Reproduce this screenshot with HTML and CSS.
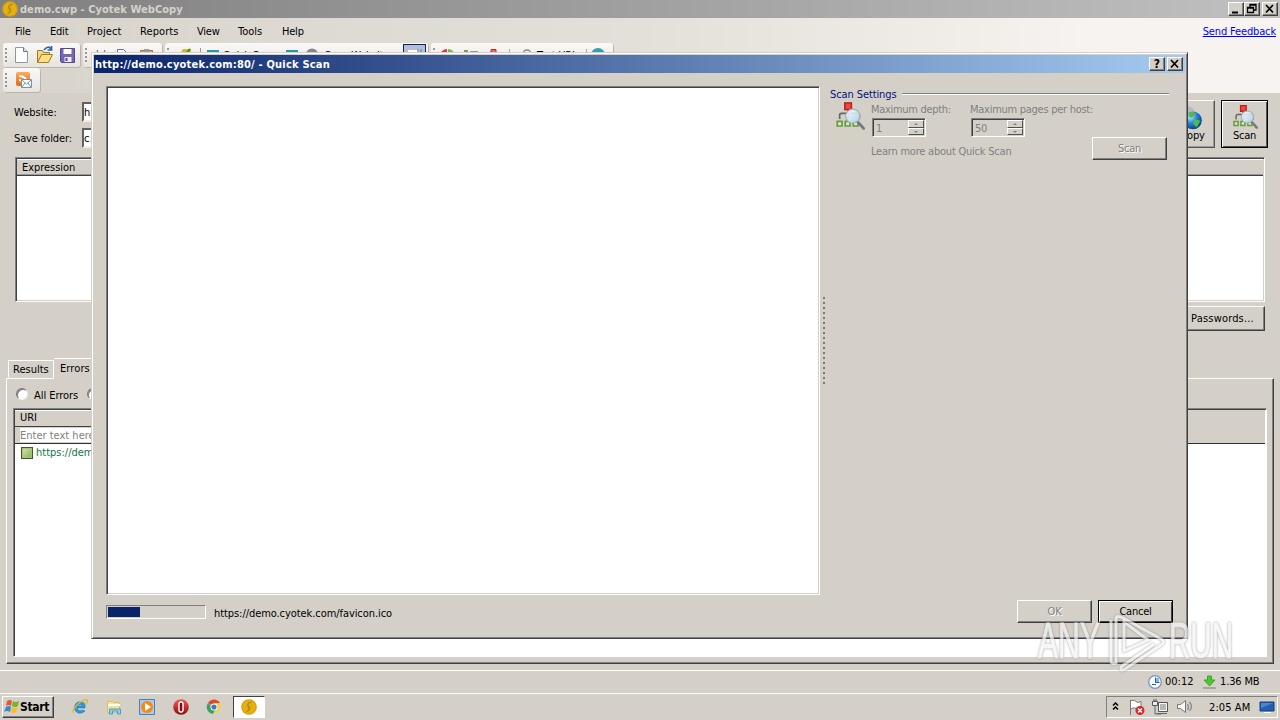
FILE: index.html
```html
<!DOCTYPE html>
<html lang="en">
<head>
<meta charset="utf-8">
<title>demo.cwp - Cyotek WebCopy</title>
<link rel="stylesheet" href="styles.css">
</head>
<body>
<svg class="defs" width="0" height="0">
  <defs>
    <radialGradient id="globe" cx=".35" cy=".3" r=".8"><stop offset="0" stop-color="#b5f1ff"/><stop offset=".45" stop-color="#2485d6"/><stop offset="1" stop-color="#06337a"/></radialGradient>
    <radialGradient id="gold"><stop offset="0" stop-color="#d6a313"/><stop offset=".65" stop-color="#e8b510"/><stop offset="1" stop-color="#d99a00"/></radialGradient>
    <linearGradient id="lens" x2="1" y2="1"><stop stop-color="#fff"/><stop offset="1" stop-color="#a9cfec"/></linearGradient>
    <linearGradient id="orange" y2="1" x2="0"><stop stop-color="#ffac5c"/><stop offset="1" stop-color="#e96612"/></linearGradient>
    <linearGradient id="red" y2="1" x2="0"><stop stop-color="#f35a52"/><stop offset="1" stop-color="#8e0c10"/></linearGradient>
    <symbol id="coin" viewBox="0 0 16 16"><circle cx="8" cy="8" r="7.8" fill="url(#gold)"/><path d="M10.5 3.5C7 3 6 6 7.4 7.6S9 12 5.5 12.4" fill="none" stroke="#a8861b" stroke-width="1.3"/></symbol>
    <symbol id="sitemap" viewBox="0 0 32 32">
      <path d="M5 19v-4q0-2 2-2h17q2 0 2 2v4M14 9v10" fill="none" stroke="#666" stroke-width="1.8"/>
      <rect x="10.500" y="2" width="7" height="7" fill="#f0483e" stroke="#b9201c" stroke-width="1.6"/>
      <path d="M2.500 21.500h5v5h-5zM11 21.500h5v5h-5zM19.500 21.500h5v5h-5z" fill="#dcebc8" stroke="#639c39" stroke-width="1.8"/>
      <path d="m24 22 6.500 7" stroke="#73797d" stroke-width="3" stroke-linecap="round"/>
      <circle cx="19" cy="16" r="7.500" fill="url(#lens)" fill-opacity=".9" stroke="#a2b1bd" stroke-width="1.3"/>
    </symbol>
  </defs>
</svg>
<div class="desktop">
  <header class="titlebar">
    <svg class="app-icon"><use href="#coin"/></svg>
    <span class="app-title">demo.cwp - Cyotek WebCopy</span>
    <div class="caption-buttons">
      <i class="cap"><svg width="14" height="12"><path d="M3 9.500h6" stroke="#000" stroke-width="2"/></svg></i>
      <i class="cap"><svg width="14" height="12"><path d="M5 4V1.500h6V7H9M5 2h6M2.500 4.500h6v5h-6zM2 5h7" fill="none" stroke="#000" stroke-width="1.3"/></svg></i>
      <i class="cap last"><svg width="14" height="12"><path d="m3 2 7 7.500M10 2 3 9.500" stroke="#000" stroke-width="1.7"/></svg></i>
    </div>
  </header>
  <div class="bars">
    <nav class="menu">
      <span class="m1">File</span><span class="m2">Edit</span><span class="m3">Project</span><span class="m4">Reports</span><span class="m5">View</span><span class="m6">Tools</span><span class="m7">Help</span>
      <a class="feedback">Send Feedback</a>
    </nav>
    <div class="tools">
      <div class="strip s1"><i class="grip"></i>
        <svg width="68" height="22">
          <path d="M4.500 3.500h8l4 4v11h-12z" fill="#fff" stroke="#879aaa"/><path d="M12.500 3.500v4h4" fill="#d6e4ef" stroke="#64798b"/>
          <path d="M26.500 18.500V6.500h5l1 2h6v3" fill="#f2d98a" stroke="#9c7b2f"/><path d="m26.500 18.500 4-8h11l-4 8z" fill="#ffdf80" stroke="#a17b29"/><path d="M33 6q4-5 7-1M40.500 2v4h-4" fill="none" stroke="#2d63ae" stroke-width="1.7"/>
          <path d="M49.500 4.500h14v14h-13l-1-1z" fill="#7567b3" stroke="#564894"/><path d="M52.500 5h8v5h-8z" fill="#fff"/><path d="M53.500 13h7v5h-7z" fill="#eef"/><path d="M54.500 14h2v3h-2z" fill="#564894"/>
        </svg>
      </div>
      <div class="strip s2"><i class="grip"></i>
        <svg width="70" height="22"><path d="m6 6 2 6M14 6l-2 6" stroke="#73859a" stroke-width="1.2"/><path d="M26.500 5.500h6l3 3v6h-9z" fill="#fff" stroke="#63738b"/><path d="M49.500 6.500h12v9h-12z" fill="#d9a870" stroke="#9e6a3a"/><path d="M53 5h5v4h-5z" fill="#999"/></svg>
      </div>
      <div class="strip s3"><i class="grip"></i>
        <svg width="34" height="22"><path d="M2 8h6l2-3h8v12H2z" fill="#d5b739"/><path d="m11 12 6-7" stroke="#528c2f" stroke-width="2"/><path d="M27.500 4v15" stroke="#999"/></svg>
        <svg width="14" height="22"><rect y="6" width="12" height="9" fill="#2898a7"/></svg><span class="quick">Quick Scan</span>
        <svg width="38" height="22"><rect x="1" y="6" width="12" height="9" fill="#2898a7"/><circle cx="27" cy="11" r="6.500" fill="#888890"/></svg><span class="copyw">Copy Website</span>
        <i class="picked"><svg width="20" height="20"><path d="M4 5h10v9H4z" fill="#fff"/><path d="M14 4v9M17 4v9" stroke="#6480a5"/></svg></i>
      </div>
      <div class="strip s4"><i class="grip"></i>
        <svg width="82" height="22"><path d="M8 5a7 7 0 0 0-7 7h7z" fill="#d63940"/><path d="M9 5a7 7 0 0 1 7 7H9z" fill="#76ba48"/><path d="M25 6h4v4h-4z" fill="#7c9d53"/><path d="M31 8h8" stroke="#777" stroke-width="1.500"/><path d="M52 5.500h5v6h-5z" fill="#ef6c58" stroke="#b32f25"/><path d="M70.500 5v15" stroke="#aaa"/></svg>
        <svg width="14" height="22"><circle cx="6" cy="10" r="4" fill="none" stroke="#888" stroke-width="1.500"/><circle cx="6" cy="10" r="1.500"/></svg><span class="testurl">Test URL</span>
        <svg width="30" height="22"><path d="M5.500 5v15" stroke="#aaa"/><circle cx="17" cy="11" r="7" fill="#359fb3"/></svg>
      </div>
    </div>
    <div class="tools second">
      <div class="strip rss"><i class="grip"></i><svg width="25" height="24"><rect x="5" y="4" width="14" height="14" rx="2" fill="url(#orange)"/><path d="M8 8q8 0 8 8M8 12q4 0 4 4" fill="none" stroke="#fff" stroke-width="1.8"/><path d="M10.500 11.500h10v8h-10z" fill="#fff" stroke="#7793ae"/><path d="m11 12 4.500 4 4.500-4M11 19l3-4M20 19l-3-4" fill="none" stroke="#7793ae"/></svg></div>
    </div>
  </div>
  <section class="project">
    <div class="fields">
      <div class="field"><label class="l1">Website:</label><span class="input">http://demo.cyotek.com/</span></div>
      <div class="field"><label class="l2">Save folder:</label><span class="input">c:\</span></div>
    </div>
    <div class="big-buttons">
      <span class="big"><svg width="30" height="30" viewBox="0 0 32 32"><path d="m8 2 8 3 6 7-5 5L8 15z" fill="#b4b8ba"/><circle cx="17" cy="18.500" r="9.500" fill="url(#globe)"/><path d="M13 10q5-2 7 2l-5 4q-4-2-2-6m6 7 6 2-4 7-4-4z" fill="#51b947"/></svg><b class="copy-label">Copy</b></span>
      <span class="big focus"><svg width="26" height="26"><use href="#sitemap"/></svg><b>Scan</b></span>
    </div>
  </section>
  <div class="rules"><div class="rules-head"><span>Expression</span></div></div>
  <div class="actions"><span class="button passwords">Passwords...</span></div>
  <div class="tabs"><span class="tab results">Results</span><span class="tab active">Errors</span></div>
  <section class="page">
    <div class="radios"><i class="radio"></i><span class="all">All Errors</span><i class="radio r2"></i></div>
    <div class="grid">
      <div class="grid-head"><span>URI</span></div>
      <div class="grid-filter"><span>Enter text here</span></div>
      <div class="grid-row"><i class="green"></i><span>https://demo.cyotek.com/</span></div>
    </div>
  </section>
  <footer class="status">
    <svg width="16" height="16"><circle cx="8" cy="8" r="6.300" fill="#f5faff" stroke="#7a98b8" stroke-width="1.300"/><path d="M8 4h4v4.500H8z" fill="#8fb6e6"/><path d="M8.500 3.500v5h4M5 10.500h4" fill="none" stroke="#2b5da6"/></svg>
    <span class="clock">00:12</span>
    <svg width="16" height="16"><path d="M5.500 2h4v4H13l-5.500 6L2 6h3.500z" fill="#46cb28" stroke="#3fa42a"/><path d="M1 14h13" stroke="#999" stroke-width="1.500"/></svg>
    <span class="size">1.36 MB</span>
  </footer>
  <footer class="taskbar">
    <span class="start"><svg width="17" height="17"><path d="M4 2q3-2 5 0L8 7Q5 5 3 7z" fill="#e7582d"/><path d="M10 2q3 2 6 0l-1 5q-3 2-6 0z" fill="#73b632"/><path d="M3 8q3-2 5 0l-1 5Q4 11 1 13z" fill="#328bd2"/><path d="M9 8q3 2 6 0l-2 5q-3 2-5 0z" fill="#f7be22"/></svg><b>Start</b></span>
    <div class="launch">
      <svg width="16" height="16" viewBox="0 0 16 16"><path d="M13 9H5q1 4 6 2l2 1q-3 3-7 2-5-3-3-8 2-4 7-3 4 1 3 6M5 7h5q-1-3-5 0" fill="#2b9ddd" stroke="#1469a8" stroke-width=".5"/><path d="M2 14q-3-2 3-8t10-5q1 1-1 4" fill="none" stroke="#e4b82b" stroke-width="1.400"/></svg>
      <svg width="16" height="16" viewBox="0 0 16 16"><path d="M1.500 2.500h5l1 1h6v10h-12z" fill="#f8e28f" stroke="#d8be65"/><path d="M2 6h12" stroke="#fff" stroke-width="2"/><path d="M3.500 15V10h11v5h-3v-3h-5v3z" fill="#8bd1ed" stroke="#4a9dc6"/></svg>
      <svg width="16" height="16" viewBox="0 0 16 16"><path d="M.500.500h15v15H.500z" fill="#a9cbee" stroke="#4c7eb7"/><circle cx="8" cy="8" r="6" fill="#f28a14"/><path d="m6 4 6 4-6 4z" fill="#fff"/></svg>
      <svg width="16" height="16" viewBox="0 0 16 16"><circle cx="8" cy="8" r="7.800" fill="url(#red)"/><rect x="6" y="3" width="4" height="10" rx="2" fill="#7e0c12" stroke="#fff" stroke-width="1.400"/></svg>
      <svg width="16" height="16" viewBox="0 0 16 16"><path d="M2 4a7 7 0 0 1 12 0H8v4z" fill="#e24535"/><path d="M2 4a7 7 0 0 0 5 11l3-5-3-1z" fill="#3ba35a"/><path d="M8 4h6q3 7-7 11l3-6z" fill="#f7ce40"/><circle cx="8" cy="8" r="3.500" fill="#fff"/><circle cx="8" cy="8" r="2.600" fill="#347cd3"/></svg>
    </div>
    <span class="task"><svg width="16" height="16"><use href="#coin"/></svg></span>
    <div class="tray">
      <svg width="10" height="14"><path d="m2 5.500 2.500-2.500L7 5.500M2 9.500 4.500 7 7 9.500" fill="none" stroke="#000" stroke-width="1.500"/></svg>
      <svg width="18" height="18"><path d="M3.500 2v15M4 2.500q4-1 5 1t5 0v8q-4 2-5-.500t-5 0" fill="#fff" stroke="#777"/><circle cx="13" cy="12.500" r="4.500" fill="#d82727"/><path d="m11 10.500 4 4m0-4-4 4" stroke="#fff" stroke-width="1.500"/></svg>
      <svg width="18" height="18"><path d="M7.500 4.500h9v9h-9z" fill="#b8b8b8" stroke="#555"/><path d="M8.500 5.500h7v7h-7z" fill="none" stroke="#fff"/><path d="M6 15.500h10M4 7v9h6" fill="none" stroke="#666"/><path d="M1.500 3.500h5v4h-5zM3 1v2m2-2v2" fill="#eee" stroke="#555"/></svg>
      <svg width="18" height="18"><path d="M2.500 6.500h3l5-4v12l-5-4h-3z" fill="#f7f7f7" stroke="#777"/><path d="M12.500 6q2 3 0 6m2-8q4 5 0 9" fill="none" stroke="#888" stroke-width="1.300"/></svg>
      <span class="time">2:05 AM</span>
      <svg width="16" height="14"><path d="M1 2h14v9H1z" fill="#265eb2" stroke="#143d7e"/><path d="M2 3h12L2 8z" fill="#4c88d0"/><path d="M5 12.500h7" stroke="#fff"/></svg>
    </div>
  </footer>

  <div class="dialog">
    <header class="dlg-title"><b>http://demo.cyotek.com:80/ - Quick Scan</b>
      <div class="caption-buttons"><i class="cap q">?</i><i class="cap last"><svg width="14" height="12"><path d="m3 2 7 7.500M10 2 3 9.500" stroke="#000" stroke-width="1.700"/></svg></i></div>
    </header>
    <div class="dlg-body">
      <div class="scan-list"></div>
      <div class="splitter"></div>
      <div class="settings">
        <div class="group-title"><span>Scan Settings</span><i></i></div>
        <div class="settings-row">
          <svg width="32" height="32" viewBox="-1 1 34 34"><use href="#sitemap" width="32" height="32"/></svg>
          <div class="options">
            <div class="pair">
              <div class="option o1"><span class="t-depth">Maximum depth:</span><div class="spin"><em>1</em><div class="arrows"><i class="up"></i><i class="down"></i></div></div></div>
              <div class="option"><span class="t-pages">Maximum pages per host:</span><div class="spin"><em>50</em><div class="arrows"><i class="up"></i><i class="down"></i></div></div></div>
            </div>
            <div class="learn-row"><span class="learn">Learn more about Quick Scan</span><span class="button disabled scan-button">Scan</span></div>
          </div>
        </div>
      </div>
    </div>
    <div class="dlg-foot">
      <div class="progress"><i></i></div>
      <span class="progress-text">https://demo.cyotek.com/favicon.ico</span>
      <span class="button disabled ok">OK</span>
      <span class="button default">Cancel</span>
    </div>
  </div>
  <svg class="watermark" width="210" height="64">
    <g class="mark">
      <text x="2" y="46" textLength="62" lengthAdjust="spacingAndGlyphs">ANY</text>
      <text x="133" y="46" textLength="64" lengthAdjust="spacingAndGlyphs">RUN</text>
      <path d="M75 8v40q0 5 5 3V7q0-5 9 0l36 20q5 3 0 6L89 57q-5 3-4-2l33-23M88 10v29l24-11z"/>
    </g>
  </svg>
</div>
</body>
</html>
```

FILE: styles.css
```css
* { box-sizing: border-box; }
body { margin: 0; font: 11px/14px "DejaVu Sans Condensed", "DejaVu Sans", sans-serif; font-stretch: condensed; letter-spacing: -.22px; color: #000; overflow: hidden; }
span, label, b, a { white-space: nowrap; }
svg { display: block; flex: none; }
i, em { font-style: normal; }
.defs { position: absolute; }
.desktop { position: relative; width: 1280px; height: 720px; background: #d4d0c8; display: flex; flex-direction: column; overflow: hidden; }
.titlebar { height: 18px; flex: none; display: flex; align-items: center; background: linear-gradient(90deg, #808080, #c0c0c0); padding-left: 2px; color: #d6d2ca; }
.app-icon { width: 16px; height: 16px; margin-right: 2px; }
.app-title { font-weight: bold; letter-spacing: .04px; padding-top: 1px; }
.caption-buttons { margin-left: auto; display: flex; padding-right: 2px; }
.cap { width: 16px; height: 14px; background: #d4d0c8; border: 1px solid; border-color: #fff #404040 #404040 #fff; box-shadow: inset -1px -1px #808080; color: #000; overflow: hidden; }
.cap.last { margin-left: 2px; }
.bars { height: 75px; flex: none; background: linear-gradient(90deg, #d8d4cc, #e3e0d9 50%, #f6f3f0 85%); }
.menu { height: 25px; display: flex; align-items: center; gap: 19px; padding: 2px 4px 0 15px; }
.m1 { width: 16px; } .m2 { width: 18px; } .m3 { width: 34px; letter-spacing: .1px; } .m4 { width: 38px; letter-spacing: .1px; } .m5 { width: 22px; } .m6 { width: 25px; letter-spacing: 0; } .m7 { width: 21px; }
.feedback { margin-left: auto; color: #00f; text-decoration: underline; letter-spacing: -.14px; }
.tools { display: flex; height: 25px; padding-left: 3px; gap: 3px; }
.strip { display: flex; align-items: center; height: 24px; background: linear-gradient(#faf9f7, #e7e4df); border-radius: 3px; box-shadow: 1px 1px #b8b4ac; overflow: hidden; }
.s1 { width: 77px; } .s2 { width: 79px; } .s3 { width: 263px; } .s4 { width: 182px; }
.rss { width: 37px; }
.grip { width: 2px; height: 15px; margin: 0 4px 0 2px; flex: none; background: repeating-linear-gradient(#9b9890 0 2px, transparent 2px 4px); }
.quick { width: 64px; padding: 2px 0 0 2px; } .copyw { width: 80px; padding: 2px 0 0 1px; }
.testurl { width: 46px; padding: 2px 0 0 2px; }
.picked { width: 23px; height: 22px; background: #b5bed2; border: 1px solid #0a246a; }
.project { height: 64px; flex: none; display: flex; justify-content: space-between; padding: 7px 12px 0 14px; }
.fields { padding-top: 2px; display: flex; flex-direction: column; gap: 6px; }
.field { display: flex; align-items: center; height: 20px; }
.field label { width: 68px; padding-top: 1px; }
.l1 { letter-spacing: 0; }
.l2 { letter-spacing: -.12px; }
.input { width: 500px; height: 20px; background: #fff; border: 2px solid; border-color: #606060 #eee #eee #606060; padding-top: 1px; line-height: 15px; letter-spacing: .3px; }
.big-buttons { display: flex; gap: 6px; }
.big { width: 47px; height: 48px; border: 1px solid; border-color: #fff #555 #555 #fff; display: flex; flex-direction: column; align-items: center; box-shadow: inset -1px -1px #999; overflow: hidden; }
.big b { font-weight: normal; }
.big > svg { margin-top: 2px; }
.big.focus { border-color: #000; box-shadow: inset 1px 1px #fff, inset -1px -1px #555; }
.big.focus > svg { margin-top: 3px; }
.big.focus b { margin-top: -1px; }
.copy-label { margin: -4px 0 0 2px; }
.rules { height: 145px; flex: none; margin: 0 15px; background: #fff; border: 1px solid; border-color: #808080 #fff #fff #808080; box-shadow: inset 1px 1px #404040, inset -1px -1px #d4d0c8; padding: 1px; }
.rules-head { height: 17px; background: #d4d0c8; border-bottom: 1px solid #404040; box-shadow: inset 0 1px #fff, inset 0 -1px #999; padding: 1px 5px; line-height: 15px; letter-spacing: -.05px; }
.actions { height: 56px; flex: none; display: flex; justify-content: flex-end; padding: 4px 15px 0; }
.button { display: flex; align-items: center; justify-content: center; border: 1px solid; border-color: #fff #404040 #404040 #fff; box-shadow: inset -1px -1px #808080; width: 75px; height: 23px; background: #d4d0c8; }
.passwords { width: 85px; height: 25px; letter-spacing: .17px; padding-top: 1px; }
.tabs { height: 20px; flex: none; display: flex; align-items: flex-end; padding-left: 8px; }
.tab { border: 1px solid; border-color: #fff #505050 transparent #fff; width: 46px; height: 18px; padding: 2px 4px; letter-spacing: 0; }
.results { border-right-color: #fff; }
.tab.active { height: 21px; margin-bottom: -1px; width: 48px; padding: 3px 5px; background: #d4d0c8; position: relative; border-left: 0; padding-left: 6px; letter-spacing: .1px; }
.page { height: 286px; flex: none; margin: 0 6px; border: 1px solid; border-color: #fff #404040 #404040 #fff; box-shadow: inset -1px -1px #808080; padding: 8px 6px 6px; }
.radios { height: 21px; display: flex; align-items: flex-start; padding-left: 3px; }
.radio { width: 12px; height: 12px; margin-top: 1px; border-radius: 50%; background: #fff; border: 1px solid; border-color: #777 #eee #eee #777; box-shadow: inset 1px 1px #777; }
.all { width: 47px; margin: 2px 6px 0; letter-spacing: -.05px; }
.grid { height: 249px; border: 1px solid; border-color: #808080 #fff #fff #808080; box-shadow: inset 1px 1px #404040; background: #fff; padding: 1px; }
.grid-head { height: 17px; background: #d4d0c8; }
.grid-head span { display: block; width: 300px; height: 17px; border-bottom: 1px solid #404040; box-shadow: inset 0 1px #fff; padding: 1px 5px; letter-spacing: 0; }
.grid-filter { height: 17px; background: #d4d0c8; border-bottom: 1px solid #303030; color: #808080; padding: 1px 5px; }
.grid-filter span { display: block; width: 90px; background: #fff; height: 14px; letter-spacing: 0; line-height: 15px; }
.grid-row { height: 18px; display: flex; align-items: center; gap: 3px; padding-left: 6px; color: #157347; letter-spacing: 0; }
.green { width: 12px; height: 12px; border: 1px solid #3e5c20; background: linear-gradient(135deg, #d7e7b2, #83ad55); box-shadow: inset 0 0 0 1px #a5c37b; }
.status { height: 22px; flex: none; margin-top: 6px; border-top: 1px solid #fff; display: flex; align-items: center; padding-left: 1147px; }
.clock { width: 29px; margin: 0 8px 0 2px; letter-spacing: 0; } .size { margin-left: 2px; letter-spacing: -.15px; }
.taskbar { height: 27px; flex: none; margin-top: 1px; border-top: 1px solid #fff; display: flex; align-items: center; padding-left: 2px; }
.start { width: 52px; height: 22px; border: 1px solid; border-color: #fff #404040 #404040 #fff; box-shadow: inset -1px -1px #808080; display: flex; align-items: center; padding-left: 0; }
.start b { font-size: 12px; letter-spacing: -.3px; }
.launch { display: flex; width: 179px; padding-left: 18px; gap: 17.5px; }
.task { width: 32px; height: 22px; background: #fff; border: 1px solid; border-color: #404040 #fff #fff #404040; display: flex; align-items: center; justify-content: center; }
.tray { width: 172px; height: 22px; margin: 0 2px 0 auto; border: 1px solid; border-color: #808080 #fff #fff #808080; display: flex; align-items: center; padding-left: 4px; gap: 6px; }
.time { width: 42px; margin: 1px 2px 0 10px; letter-spacing: .1px; }
.dialog { position: absolute; left: 91px; top: 52px; width: 1097px; height: 587px; background: #d4d0c8; border: 1px solid; border-color: #d4d0c8 #404040 #404040 #d4d0c8; box-shadow: inset 1px 1px #fff, inset -1px -1px #808080; padding: 2px; }
.dlg-title { height: 18px; background: linear-gradient(90deg, #0a246a, #a6caf0); color: #fff; display: flex; align-items: center; padding-left: 1px; letter-spacing: .2px; }
.dlg-title b { padding-top: 1px; }
.q { font-weight: bold; font-size: 12px; line-height: 12px; text-align: center; }
.dlg-body { display: flex; height: 522px; padding: 13px 0 0 12px; }
.scan-list { width: 714px; height: 509px; background: #fff; border: 1px solid; border-color: #808080 #fff #fff #808080; box-shadow: inset 1px 1px #404040, inset -1px -1px #d4d0c8; flex: none; }
.splitter { width: 3px; height: 88px; margin: 211px 4px 0 3px; flex: none; background: radial-gradient(circle at 1px 1px, #777 0 1px, transparent 1.3px) 0 0 / 3px 5px; }
.settings { width: 339px; }
.group-title { height: 16px; display: flex; align-items: center; color: #00137f; }
.group-title span { width: 72px; padding-top: 1px; letter-spacing: -.1px; }
.group-title i { flex: 1; height: 2px; background: #808080; border-bottom: 1px solid #fff; }
.settings-row { display: flex; padding-left: 4px; }
.options { width: 335px; padding-left: 5px; color: #808080; }
.pair { display: flex; height: 35px; }
.option span { display: block; height: 16px; line-height: 16px; }
.t-depth { letter-spacing: -.3px; }
.t-pages { letter-spacing: -.27px; }
.o1 { width: 99px; }
.spin { width: 54px; height: 19px; margin-left: 1px; border: 1px solid; border-color: #808080 #fff #fff #808080; box-shadow: inset 1px 1px #404040; display: flex; justify-content: space-between; padding: 1px; }
.spin em { padding: 2px 2px; }
.arrows { width: 16px; display: flex; flex-direction: column; }
.arrows i { height: 8px; border: 1px solid; border-color: #fff #505050 #505050 #fff; display: flex; justify-content: center; padding-top: 2px; }
.up::before { content: ""; border: 2px solid transparent; border-top: 0; border-bottom-color: #808080; height: 0; }
.down::before { content: ""; border: 2px solid transparent; border-bottom: 0; border-top-color: #808080; height: 0; }
.learn-row { display: flex; justify-content: space-between; width: 296px; }
.learn { margin-top: 8px; }
.disabled { color: #808080; text-shadow: 1px 1px #fff; }
.dlg-foot { display: flex; align-items: flex-start; padding: 5px 12px 0; }
.progress { width: 100px; height: 14px; margin-top: 5px; border: 1px solid; border-color: #808080 #fff #fff #808080; padding: 1px; }
.progress i { display: block; width: 32px; height: 10px; background: #0a246a; }
.progress-text { margin: 7px 0 0 8px; letter-spacing: -.07px; }
.ok { margin: 0 6px 0 auto; }
.default { border-color: #000; box-shadow: inset 1px 1px #fff, inset -1px -1px #404040; }
.watermark { position: absolute; left: 1036px; top: 612px; filter: drop-shadow(0 0 1px #777); opacity: .7; }
.mark { fill: none; stroke: #f4f4f4; stroke-width: 3px; font: 50px "Liberation Sans", sans-serif; letter-spacing: 0; }
.mark text { fill: #f4f4f4; stroke-width: 1px; }
```
